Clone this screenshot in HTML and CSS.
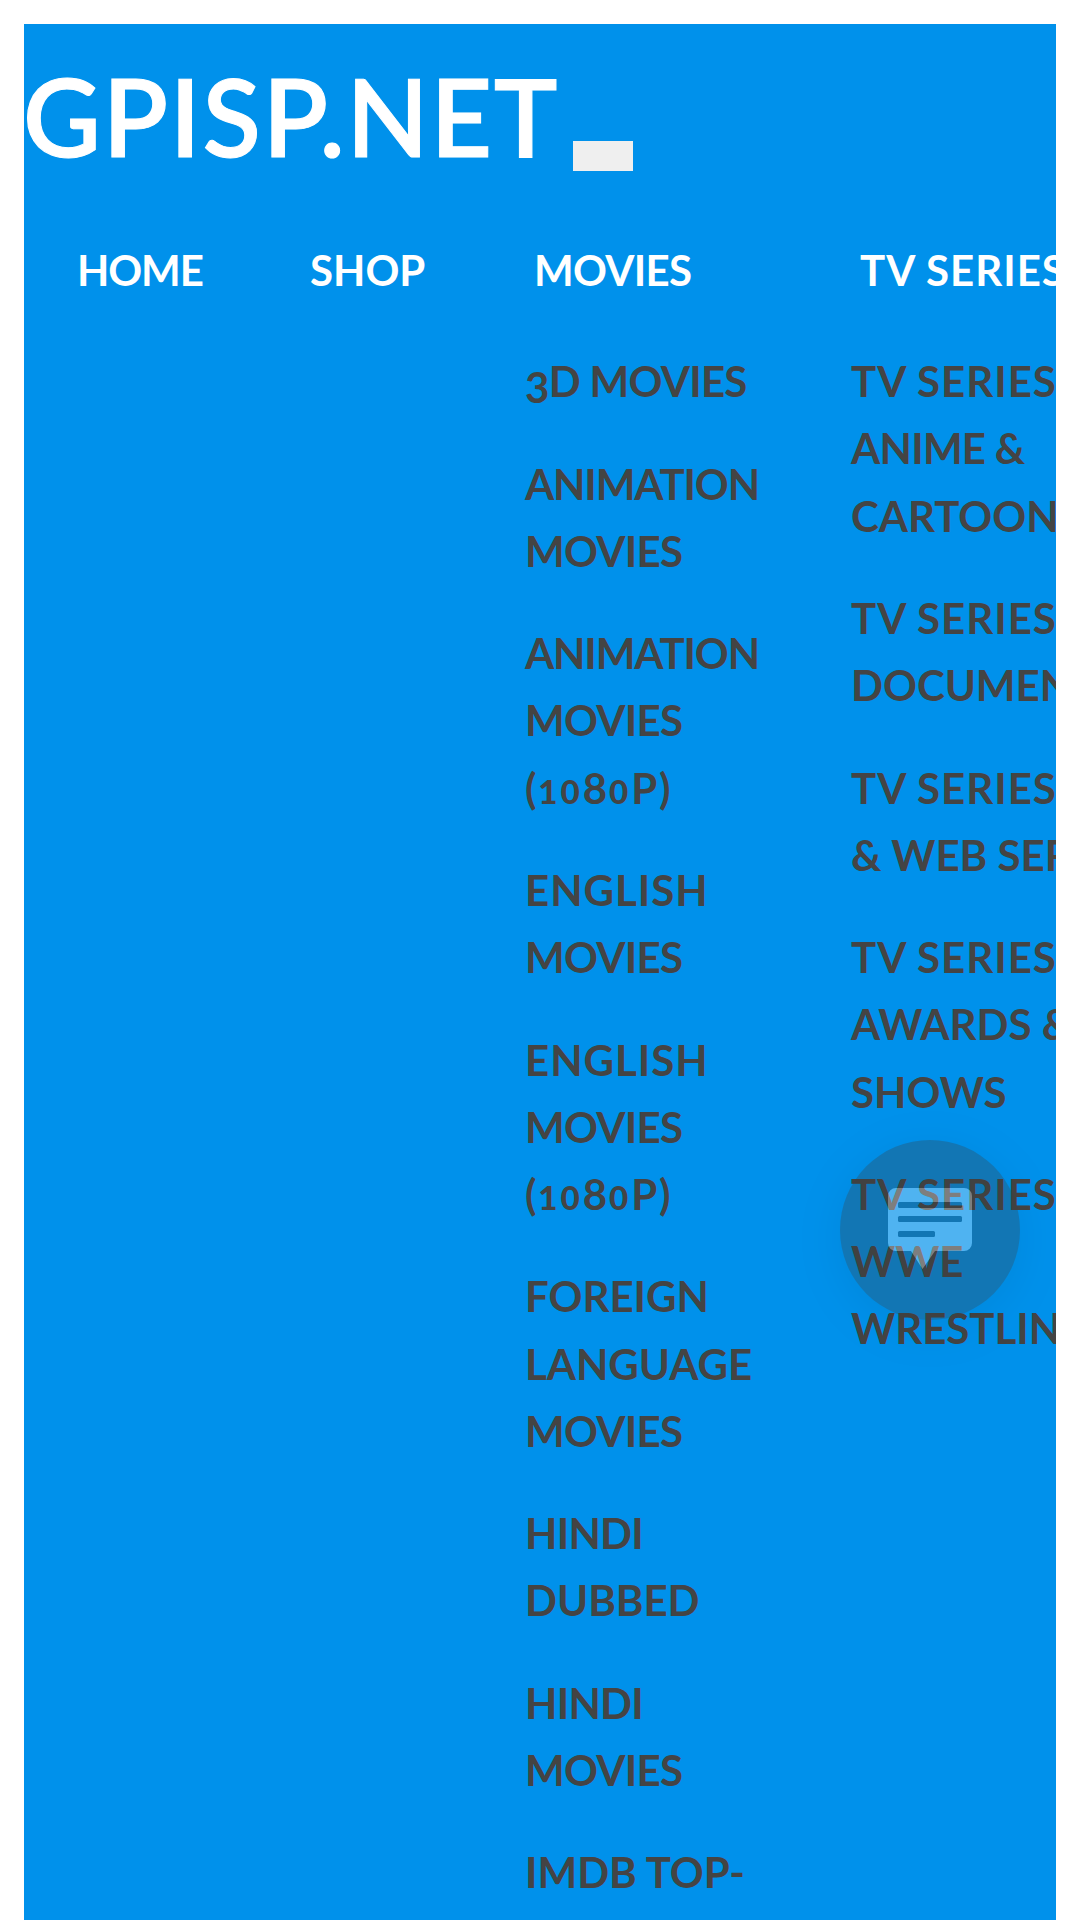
FILE: index.html
```
<!DOCTYPE html>
<html lang="en">
<head>
    <meta charset="UTF-8">
    <meta name="viewport" content="width=device-width, initial-scale=1.0">
    <title>GPISP.NET</title>
    <link rel="stylesheet" href="styles.css">
</head>
<body>
    <div class="page">
        <header class="header">
            <a class="brand">GPISP.NET</a>
            <button class="menu-toggle" type="button" aria-label="Menu"></button>
        </header>

        <nav class="main-nav">
            <div class="nav-item"><a class="nav-link tighter">HOME</a></div>
            <div class="nav-item"><a class="nav-link">SHOP</a></div>
            <div class="nav-item">
                <a class="nav-link tight">MOVIES</a>
                <ul class="submenu">
                    <li class="tight"><span class="drop">3</span>D MOVIES</li>
                    <li><span class="tighter">ANIMATION</span><br><span class="tight">MOVIES</span></li>
                    <li><span class="tighter">ANIMATION</span><br><span class="tight">MOVIES</span><br><span class="figures">(<span class="low">10</span>8<span class="low">0</span>P)</span></li>
                    <li><span class="wide">ENGLISH</span><br><span class="tight">MOVIES</span></li>
                    <li><span class="wide">ENGLISH</span><br><span class="tight">MOVIES</span><br><span class="figures">(<span class="low">10</span>8<span class="low">0</span>P)</span></li>
                    <li>FOREIGN<br>LANGUAGE<br><span class="tight">MOVIES</span></li>
                    <li><span class="tight">HINDI</span><br>DUBBED</li>
                    <li><span class="tight">HINDI</span><br><span class="tight">MOVIES</span></li>
                    <li>IMDB TOP-</li>
                </ul>
            </div>
            <div class="nav-item">
                <a class="nav-link wide">TV SERIES</a>
                <ul class="submenu">
                    <li><span class="wide">TV SERIES</span><br><span class="tight">ANIME &amp;</span><br>CARTOON</li>
                    <li><span class="wide">TV SERIES</span><br>DOCUMENTARY</li>
                    <li><span class="wide">TV SERIES</span><br>&amp; WEB SERIES</li>
                    <li><span class="wide">TV SERIES</span><br>AWARDS &amp;<br>SHOWS</li>
                    <li><span class="wide">TV SERIES</span><br>WWE<br>WRESTLING</li>
                </ul>
            </div>
        </nav>
    </div>

    <div class="chat-button">
        <svg class="chat-icon" width="84" height="84" viewBox="0 0 84 84">
            <path fill="#fff" d="M8 0h68a8 8 0 0 1 8 8v47a8 8 0 0 1-8 8H47L34.500 81 23 63H8a8 8 0 0 1-8-8V8a8 8 0 0 1 8-8z"/>
            <g fill="#3c3c3c">
                <rect x="10" y="14" width="64" height="6" rx="1.500"/>
                <rect x="10" y="28" width="64" height="6" rx="1.500"/>
                <rect x="10" y="43" width="37" height="6" rx="1.500"/>
            </g>
        </svg>
    </div>
</body>
</html>
```
FILE: styles.css
```
* {
    box-sizing: border-box;
}
body {
    margin: 0;
    padding: 24px;
    height: 1920px;
    overflow: hidden;
    background: #fff;
    font-family: Lato, "Open Sans", sans-serif;
}
.page {
    height: 1920px;
    overflow: hidden;
    background: #0091eb;
}
.header {
    display: flex;
    align-items: flex-start;
    height: 192px;
}
.brand {
    width: 549px;
    padding-top: 20px;
    font-size: 107px;
    font-weight: 600;
    line-height: 144px;
    letter-spacing: 1.8px;
    text-indent: -1px;
    color: #fff;
    white-space: nowrap;
    -webkit-text-stroke: 1px #fff;
}
.menu-toggle {
    width: 60px;
    height: 30px;
    margin-top: 117px;
    padding: 0;
    border: 0;
    background: #efefef;
}
.main-nav {
    display: grid;
    grid-template-columns: 233px 224px 326px 400px;
    padding-left: 8px;
}
.nav-item {
    font-size: 42px;
    font-weight: 700;
    line-height: 67.2px;
    white-space: nowrap;
}
.nav-link {
    display: block;
    padding: 21px 0 44px 45px;
    color: #fff;
}
.submenu {
    margin: 0;
    padding: 0 0 0 36px;
    list-style: none;
    color: #444;
}
.submenu li {
    padding-bottom: 35.2px;
}
.tight {
    letter-spacing: -0.7px;
}
.tighter {
    letter-spacing: -1.1px;
}
.wide {
    letter-spacing: 1px;
}
/* old-style figures: 0 and 1 sit at x-height, 3 hangs below the baseline */
.figures {
    letter-spacing: 1.8px;
}
.low {
    font-size: 0.79em;
    font-weight: 900;
    line-height: 0;
    letter-spacing: 3px;
}
.drop {
    line-height: 0;
    vertical-align: -6px;
}
.chat-button {
    position: absolute;
    top: 1140px;
    left: 840px;
    width: 180px;
    height: 180px;
    border-radius: 50%;
    background: #3c3c3c;
    box-shadow: 0 9px 42px rgba(0, 0, 0, 0.2);
    opacity: 0.31;
}
.chat-icon {
    display: block;
    margin: 48px 0 0 48px;
}
```
